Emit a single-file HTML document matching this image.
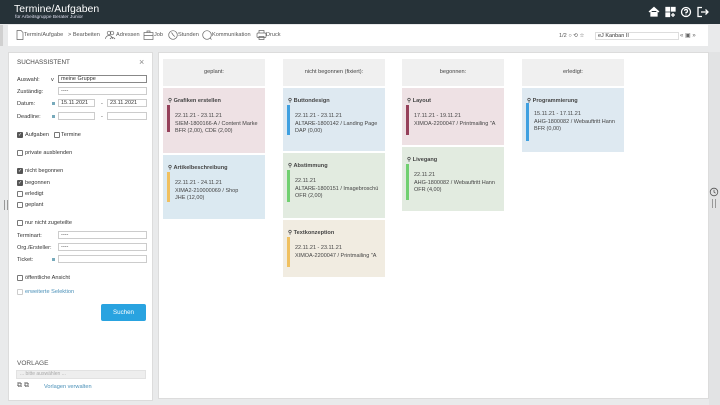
<!DOCTYPE html>
<html><head><meta charset="utf-8"><style>
*{margin:0;padding:0;box-sizing:border-box}
body{width:720px;height:405px;overflow:hidden;background:#e9eaeb;font-family:"Liberation Sans",sans-serif;color:#333;position:relative}
.a{position:absolute}
.hdr{left:0;top:0;width:720px;height:24px;background:#263238}
.tb{left:8px;top:25px;width:700px;height:21px;background:#fff}
.t{font-size:5.6px;white-space:nowrap;position:absolute}
.panel{background:#fff;border:1px solid #dcdcdc}
.inp{position:absolute;height:8px;border:1px solid #ccc;background:#fff;font-size:5.5px;line-height:7px;padding-left:2px}
.cb{position:absolute;width:6px;height:6px;border:1px solid #777;border-radius:1px;background:#fff;color:#fff;font-size:5px;line-height:5px;text-align:center}
.cb.on{background:#555;border-color:#555}
.col{position:absolute;width:102px;height:27px;background:#f0f0f0;font-size:5.6px;text-align:center;line-height:27px;color:#444}
.card{position:absolute;width:102px}
.card .ti{position:absolute;left:5px;top:10px;font-size:5.6px;font-weight:bold;color:#444}
.card .bar{position:absolute;left:4px;top:17px;width:3px}
.card .tx{position:absolute;left:12px;top:25px;font-size:5.5px;line-height:7.6px;color:#444;white-space:nowrap}
.tbt{position:absolute;top:32px;font-size:5.6px;color:#555;white-space:nowrap}
</style></head><body>
<div class="a hdr"></div>
<div class="t" style="left:14px;top:3px;font-size:10.5px;color:#fff">Termine/Aufgaben</div>
<div class="t" style="left:15px;top:15px;font-size:4.8px;color:#dde">für Arbeitsgruppe Berater Junior</div>
<svg class="a" style="left:648px;top:6px" width="64" height="12" viewBox="0 0 64 12" fill="none" stroke="#fff" stroke-width="1.3">
<path d="M1 6 L6 1.5 L11 6 M3 5 V10 H9 V5" fill="#fff"/>
<rect x="18" y="1.5" width="3.5" height="3.5" fill="#fff"/><rect x="23.5" y="1.5" width="3.5" height="3.5" fill="#fff"/><rect x="18" y="7" width="3.5" height="3.5" fill="#fff"/><path d="M25 7v4M23 9h4"/>
<circle cx="38" cy="6" r="4.5"/><path d="M36.5 4.8a1.5 1.5 0 1 1 1.5 1.7V7.5M38 8.6v.6"/>
<path d="M54 1.5H50V10.5H54M53 6H60M57.5 3.5L60 6L57.5 8.5"/></svg>
<div class="a tb"></div>
<div class="a" style="left:0;top:25px;width:3px;height:21px;background:#d0d0d0"></div>
<svg class="a" style="left:0;top:29px" width="290" height="12" fill="none" stroke="#666" stroke-width=".7">
<path d="M17 1.5h4l2 2v7h-6z"/>
<circle cx="109" cy="4" r="1.8"/><circle cx="112" cy="4" r="1.8"/><path d="M105.5 10a3.5 3.5 0 0 1 7 0M110 10a3 3 0 0 1 5 0"/>
<rect x="144" y="3.5" width="9" height="7"/><path d="M147 3.5v-1.5h3v1.5M144 6.5h9"/>
<circle cx="173" cy="6" r="4.3"/><path d="M171.5 3.5l2 3 1.5 1"/>
<circle cx="207" cy="6" r="4.3"/><path d="M210 9l1.5 1.5"/>
<rect x="257" y="4" width="9" height="4.5" rx="1"/><path d="M259 4V1.5h5V4M259 7.5h5v3h-5z"/>
</svg>
<div class="tbt" style="left:24px">Termin/Aufgabe</div>
<div class="tbt" style="left:68px">&gt; Bearbeiten</div>
<div class="tbt" style="left:116px">Adressen</div>
<div class="tbt" style="left:154px">Job</div>
<div class="tbt" style="left:178px">Stunden</div>
<div class="tbt" style="left:212px">Kommunikation</div>
<div class="tbt" style="left:266px">Druck</div>
<div class="t" style="left:559px;top:33px;color:#555">1/2 ○ ⟲ ☆</div>
<div class="inp" style="left:595px;top:32px;width:84px;border-color:#ddd">eJ Kanban II</div>
<div class="t" style="left:680px;top:32px;color:#666;font-size:6px">« ▣ »</div>

<div class="a panel" style="left:8px;top:52px;width:145px;height:349px"></div>
<div class="a" style="left:4px;top:200px;width:4px;height:10px;border-left:1px solid #999;border-right:1px solid #999"></div>
<div class="t" style="left:17px;top:59px;font-size:6.3px;color:#444">SUCHASSISTENT</div>
<div class="t" style="left:139px;top:57px;font-size:9px;color:#888">×</div>
<div class="t" style="left:17px;top:77px">Auswahl:</div><div class="t" style="left:51px;top:77px">v</div>
<div class="inp" style="left:58px;top:75px;width:89px;border-color:#888">meine Gruppe</div>
<div class="t" style="left:17px;top:89px">Zuständig:</div><div class="inp" style="left:58px;top:87px;width:89px">----</div>
<div class="t" style="left:17px;top:101px">Datum:</div><div class="a" style="left:52px;top:102px;width:3px;height:3px;background:#7ab"></div>
<div class="inp" style="left:58px;top:99px;width:37px">15.11.2021</div><div class="t" style="left:101px;top:101px">-</div>
<div class="inp" style="left:107px;top:99px;width:40px">23.11.2021</div>
<div class="t" style="left:17px;top:114px">Deadline:</div><div class="a" style="left:52px;top:115px;width:3px;height:3px;background:#7ab"></div>
<div class="inp" style="left:58px;top:112px;width:37px"></div><div class="t" style="left:101px;top:114px">-</div>
<div class="inp" style="left:107px;top:112px;width:40px"></div>
<div class="cb on" style="left:17px;top:132px">✓</div><div class="t" style="left:25px;top:132px">Aufgaben</div>
<div class="cb" style="left:54px;top:132px"></div><div class="t" style="left:61px;top:132px">Termine</div>
<div class="cb" style="left:17px;top:150px"></div><div class="t" style="left:25px;top:150px">private ausblenden</div>
<div class="cb on" style="left:17px;top:168px">✓</div><div class="t" style="left:25px;top:168px">nicht begonnen</div>
<div class="cb on" style="left:17px;top:180px">✓</div><div class="t" style="left:25px;top:180px">begonnen</div>
<div class="cb" style="left:17px;top:191px"></div><div class="t" style="left:25px;top:191px">erledigt</div>
<div class="cb" style="left:17px;top:202px"></div><div class="t" style="left:25px;top:202px">geplant</div>
<div class="cb" style="left:17px;top:220px"></div><div class="t" style="left:25px;top:220px">nur nicht zugeteilte</div>
<div class="t" style="left:17px;top:233px">Terminart:</div><div class="inp" style="left:58px;top:231px;width:89px">----</div>
<div class="t" style="left:17px;top:245px">Org./Ersteller:</div><div class="inp" style="left:58px;top:243px;width:89px">----</div>
<div class="t" style="left:17px;top:257px">Ticket:</div><div class="a" style="left:52px;top:258px;width:3px;height:3px;background:#7ab"></div><div class="inp" style="left:58px;top:255px;width:89px"></div>
<div class="cb" style="left:17px;top:275px"></div><div class="t" style="left:25px;top:275px">öffentliche Ansicht</div>
<div class="cb" style="left:17px;top:289px;border-color:#ccc"></div><div class="t" style="left:25px;top:289px;color:#4a90b8">erweiterte Selektion</div>
<div class="a" style="left:101px;top:304px;width:45px;height:17px;background:#29a3e0;border-radius:2px;color:#fff;font-size:6.2px;text-align:center;line-height:17px">Suchen</div>
<div class="t" style="left:17px;top:360px;font-size:6.5px;color:#555">VORLAGE</div>
<div class="a" style="left:16px;top:370px;width:130px;height:9px;background:#eee;border:1px solid #e2e2e2;font-size:5px;color:#aaa;padding-left:3px;line-height:7px">... bitte auswählen ...</div>
<div class="t" style="left:17px;top:382px;font-size:7px;color:#555">⧉ ⧉</div>
<div class="t" style="left:44px;top:384px;color:#4a90b8">Vorlagen verwalten</div>

<div class="a panel" style="left:158px;top:52px;width:551px;height:347px"></div>
<div class="a" style="left:709px;top:52px;width:11px;height:353px;background:#e2e3e4"></div>
<svg class="a" style="left:709px;top:187px" width="10" height="10" fill="none" stroke="#555" stroke-width=".8"><circle cx="5" cy="5" r="3.8"/><path d="M5 2.8V5l1.5 1.2"/></svg>
<div class="a" style="left:712px;top:199px;width:4px;height:9px;border-left:1px solid #999;border-right:1px solid #999"></div>

<div class="col" style="left:163px;top:59px">geplant:</div>
<div class="col" style="left:283px;top:59px">nicht begonnen (fixiert):</div>
<div class="col" style="left:402px;top:59px">begonnen:</div>
<div class="col" style="left:522px;top:59px">erledigt:</div>

<div class="card" style="left:163px;top:88px;height:65px;background:#eee1e4"><div class="ti">⚲ Grafiken erstellen</div><div class="bar" style="height:27px;background:#96405a"></div><div class="tx">22.11.21 - 23.11.21<br>SIEM-1800166-A / Content Marke<br>BFR (2,00), CDE (2,00)</div></div>
<div class="card" style="left:163px;top:155px;height:64px;background:#dbe9f1"><div class="ti">⚲ Artikelbeschreibung</div><div class="bar" style="height:30px;background:#f0c060"></div><div class="tx">22.11.21 - 24.11.21<br>XIMA2-210000069 / Shop<br>JHE (12,00)</div></div>

<div class="card" style="left:283px;top:88px;height:63px;background:#dee9f1"><div class="ti">⚲ Buttondesign</div><div class="bar" style="height:30px;background:#3fa0e0"></div><div class="tx">22.11.21 - 23.11.21<br>ALTARE-1800142 / Landing Page<br>DAP (0,00)</div></div>
<div class="card" style="left:283px;top:153px;height:65px;background:#e2ebe0"><div class="ti">⚲ Abstimmung</div><div class="bar" style="height:32px;background:#70d070"></div><div class="tx">22.11.21<br>ALTARE-1800151 / Imagebroschü<br>OFR (2,00)</div></div>
<div class="card" style="left:283px;top:220px;height:57px;background:#f1ece1"><div class="ti">⚲ Textkonzeption</div><div class="bar" style="height:30px;background:#f0c060"></div><div class="tx">22.11.21 - 23.11.21<br>XIMOA-2200047 / Printmailing "A</div></div>

<div class="card" style="left:402px;top:88px;height:57px;background:#eee1e4"><div class="ti">⚲ Layout</div><div class="bar" style="height:30px;background:#96405a"></div><div class="tx">17.11.21 - 19.11.21<br>XIMOA-2200047 / Printmailing "A</div></div>
<div class="card" style="left:402px;top:147px;height:64px;background:#e2ebe0"><div class="ti">⚲ Livegang</div><div class="bar" style="height:36px;background:#70d070"></div><div class="tx">22.11.21<br>AHG-1800082 / Webauftritt Hann<br>OFR (4,00)</div></div>

<div class="card" style="left:522px;top:88px;height:64px;background:#dee9f1"><div class="ti">⚲ Programmierung</div><div class="bar" style="height:38px;background:#3fa0e0;top:15px"></div><div class="tx" style="top:23px">15.11.21 - 17.11.21<br>AHG-1800082 / Webauftritt Hann<br>BFR (0,00)</div></div>
</body></html>
